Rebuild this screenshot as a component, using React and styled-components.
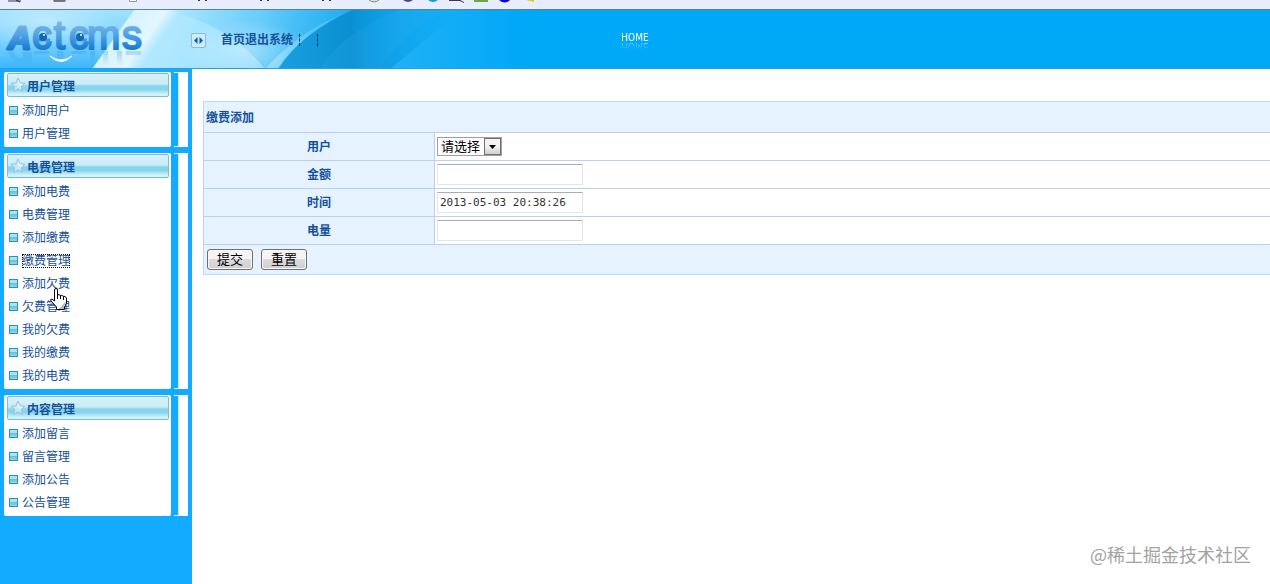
import React, { useState } from "react";
import styled, { createGlobalStyle } from "styled-components";

const GlobalStyle = createGlobalStyle`
  *, *::before {
    box-sizing: border-box;
  }
  body {
    margin: 0;
    background: #fff;
    color: #14509a;
    font-family: "Liberation Sans", "Noto Sans CJK SC", sans-serif;
    font-size: 12px;
    overflow: hidden;
  }
`;

const Page = styled.div`
  position: relative;
  display: flex;
  flex-direction: column;
  min-height: 100vh;
`;

const BrowserStrip = styled.div`
  height: 10px;
  background: linear-gradient(#eaecfd, #e4f0fb);
  border-bottom: 1px solid #5f7f9c;
  overflow: hidden;

  svg {
    display: block;
  }
`;

const Header = styled.header`
  position: relative;
  display: grid;
  grid-template-columns: 1fr auto 1fr;
  height: 59px;
  background: #00a8f8;
  border-bottom: 1px solid #2b9fda;
  overflow: hidden;
`;

const HeaderArt = styled.svg`
  position: absolute;
  top: 0;
  left: 0;
`;

const HeaderLeft = styled.div`
  position: relative;
  display: flex;
  align-items: center;
`;

const Toggle = styled.button`
  display: flex;
  align-items: center;
  justify-content: center;
  width: 15px;
  height: 15px;
  margin: 2px 0 0 41px;
  padding: 0;
  background: #c9edff;
  border: 1px solid #8fb8dc;
  border-radius: 2px;
`;

const TopNav = styled.nav`
  display: flex;
  margin-left: 15px;
  white-space: nowrap;
`;

const TopLink = styled.a`
  color: #14509a;
  font-size: 12px;
  font-weight: bold;
  line-height: 18px;
  text-decoration: none;
`;

const Divider = styled.span`
  height: 12px;
  margin: 3px 0 0 ${(props) => props.$gap}px;
  border-left: 1px dashed #0b2540;
`;

const Home = styled.a`
  align-self: center;
  color: #fff;
  font-family: "DejaVu Sans Condensed", "DejaVu Sans", sans-serif;
  font-size: 10px;
  line-height: 12px;
  padding-bottom: 4px;
  text-decoration: none;

  span {
    display: block;
    -webkit-box-reflect: below -4px linear-gradient(transparent 20%, rgba(255, 255, 255, 0.6));
  }
`;

const Body = styled.div`
  display: flex;
  flex: 1;
`;

const Sidebar = styled.aside`
  display: flex;
  flex-direction: column;
  flex: none;
  gap: 6px;
  width: 192px;
  padding: 3px 4px 0;
  background: #12abff;
`;

const PanelRow = styled.div`
  display: flex;
  justify-content: space-between;
`;

const Panel = styled.section`
  width: 167px;
  padding: 1px 2px 2px 3px;
  background: #fff;
  border-radius: 2px;
`;

const PanelEdge = styled.div`
  display: flex;
  width: 14px;
  padding: 1px 0;
  background: #fff;

  &::before {
    content: "";
    width: 5px;
    background: #12abff;
    border-right: 1px solid #bfe6ff;
  }
`;

const PanelTitle = styled.h2`
  display: flex;
  align-items: center;
  height: 24px;
  margin: 0 0 2px;
  padding: 3px 0 0 2px;
  border: 1px solid #74bfd8;
  border-radius: 2px;
  background: linear-gradient(#d6f1f8 0%, #caecf6 45%, #86d5ec 55%, #86d5ec 70%, #d3f2fa 92%);
  font-size: 12px;
  line-height: 18px;

  svg {
    margin: -4px 1px 0 0;
  }
`;

const Menu = styled.ul`
  margin: 0;
  padding: 0;
  list-style: none;
`;

const MenuItem = styled.li`
  display: flex;
  align-items: center;
  gap: 4px;
  height: 23px;
  padding-left: 2px;

  &::before {
    content: "";
    width: 9px;
    height: 9px;
    border: 1px solid #2596b8;
    background: linear-gradient(#a5e6f6 40%, #6cbfdc 50%, #8fd9ee);
  }
`;

const MenuLink = styled.a`
  color: #14509a;
  line-height: 14px;
  text-decoration: none;
  outline: ${(props) => (props.$focused ? "1px dotted #111" : "none")};
  outline-offset: -1px;
`;

const Main = styled.main`
  flex: 1;
  min-width: 0;
  padding: 32px 0 0 11px;
`;

const FormTable = styled.table`
  width: 100%;
  border-collapse: collapse;
  border: 1px solid #b5dcf6;
  border-right: none;
  table-layout: fixed;
`;

const TitleCell = styled.th`
  height: 31px;
  padding: 0 2px 2px;
  background: #e6f3ff;
  border-bottom: 1px solid #b9d0f0;
  text-align: left;
`;

const LabelCell = styled.th`
  width: 231px;
  height: 28px;
  padding: 0 0 2px;
  background: #e6f3ff;
  border: 1px solid #b9d0f0;
`;

const FieldCell = styled.td`
  padding: 0 2px;
  border-bottom: 1px solid #b9d0f0;
`;

const ButtonCell = styled.td`
  height: 30px;
  padding: 0 3px;
  background: #e6f3ff;
`;

const TextInput = styled.input`
  display: block;
  width: 146px;
  height: 21px;
  padding: 0 2px;
  background: #fff;
  border: 1px solid #dfe6ee;
  border-top-color: #abadb3;
  color: #333;
  font-family: "DejaVu Sans Mono", monospace;
  font-size: 11px;
`;

const SelectBox = styled.div`
  position: relative;
  width: 65px;
`;

const Select = styled.select`
  display: block;
  appearance: none;
  width: 100%;
  height: 19px;
  padding: 0 0 0 3px;
  background: #fff;
  border: 1px solid #a0a0a0;
  border-radius: 0;
  color: #000;
  font-family: "Liberation Sans", "Noto Sans CJK SC", sans-serif;
  font-size: 13px;
  line-height: 16px;
`;

const SelectArrow = styled.span`
  position: absolute;
  top: 1px;
  right: 1px;
  display: flex;
  align-items: center;
  justify-content: center;
  width: 17px;
  height: 17px;
  border: 1px solid #707070;
  background: linear-gradient(#f4f4f4 45%, #d0d0d0);
  pointer-events: none;
`;

const Buttons = styled.div`
  display: flex;
  gap: 8px;
`;

const Button = styled.button`
  width: 46px;
  height: 21px;
  padding: 0;
  border: 1px solid #707070;
  border-radius: 3px;
  background: linear-gradient(#f4f4f4 45%, #dcdcdc 50%, #cfcfcf);
  box-shadow: inset 0 0 0 1px #f8f8f8;
  color: #000;
  font-family: "Liberation Sans", "Noto Sans CJK SC", sans-serif;
  font-size: 13px;
  line-height: 18px;
`;

const Watermark = styled.div`
  position: absolute;
  right: 19px;
  bottom: 16px;
  color: #a2a2a2;
  font-family: "Noto Sans CJK SC", sans-serif;
  font-size: 18px;
  line-height: 27px;
`;

const Pointer = styled.svg`
  position: absolute;
  top: 288px;
  left: 50px;
  pointer-events: none;
`;

const Star = () => (
  <svg width="16" height="16" viewBox="0 0 16 16">
    <path
      d="M8 1l2 4.800 5 .4-3.800 3.300 1.200 5L8 11.800 3.600 14.500l1.200-5L1 6.200l5-.4z"
      fill="#c4ecf8"
      stroke="#9fbfe0"
      strokeLinejoin="round"
    />
    <path d="M8 3l1.400 3.500 3.600.4-2.800 2.300L8 6.500z" fill="#f2fcff" />
  </svg>
);

const StripIcons = () => (
  <svg width="560" height="9">
    <path d="M8 0h13v2H8z" fill="#8d929b" />
    <path d="M16 0l4 2" stroke="#222" />
    <path d="M53 0h13l-1 2H54z" fill="#777" />
    <path d="M129.500 0v1.500h7V0" fill="#fff" stroke="#899" />
    <path d="M199 0v1m7-1v1m55-1v1m7-1v1m55-1v1m7-1v1" stroke="#334" strokeWidth="2" />
    <path d="M369 0q5 4 10 0" fill="#ddd" stroke="#888" />
    <path d="M403 0h10q-5 4-10 0" fill="#4b4f78" />
    <path d="M428 0h10q-5 4-10 0" fill="#169be0" />
    <path d="M449 .5h12m-1 0l4 2" stroke="#40364a" />
    <path d="M474 0h14v2h-14z" fill="#6ea64e" />
    <path d="M499 0h11q-5 5-11 0" fill="#0808c8" />
    <path d="M526 0h8v2z" fill="#f0b91d" />
  </svg>
);

const Art = () => (
  <HeaderArt width="520" height="59" viewBox="0 0 520 59">
    <defs>
      <linearGradient id="sky">
        <stop offset="0" stopColor="#8bdcff" />
        <stop offset=".32" stopColor="#a8e6ff" />
        <stop offset=".5" stopColor="#8fdcfd" />
        <stop offset=".68" stopColor="#2ab4f5" />
        <stop offset="1" stopColor="#00a8f8" />
      </linearGradient>
      <linearGradient id="left" x1="0" y1="0" x2="0" y2="1">
        <stop offset="0" stopColor="#9fe2ff" />
        <stop offset=".5" stopColor="#82d4ff" />
        <stop offset="1" stopColor="#38b5fb" />
      </linearGradient>
      <linearGradient id="beam" gradientUnits="userSpaceOnUse" x1="113" y1="20" x2="200" y2="82">
        <stop offset="0" stopColor="#d8f4ff" stopOpacity=".9" />
        <stop offset=".3" stopColor="#eefaff" stopOpacity=".85" />
        <stop offset=".42" stopColor="#b8eaff" stopOpacity=".6" />
        <stop offset="1" stopColor="#b0e8ff" stopOpacity="0" />
      </linearGradient>
      <linearGradient id="top" x1="0" y1="0" x2="1" y2=".15">
        <stop offset="0" stopColor="#5cc6fa" stopOpacity="0" />
        <stop offset=".5" stopColor="#45bef8" stopOpacity=".5" />
        <stop offset="1" stopColor="#18a9ef" stopOpacity=".8" />
      </linearGradient>
      <linearGradient id="shade">
        <stop offset="0" stopColor="#19a0e0" />
        <stop offset=".4" stopColor="#0a90d2" />
        <stop offset="1" stopColor="#00a8f8" stopOpacity="0" />
      </linearGradient>
      <radialGradient id="glow">
        <stop offset="0" stopColor="#fff" stopOpacity=".75" />
        <stop offset="1" stopColor="#fff" stopOpacity="0" />
      </radialGradient>
    </defs>
    <path d="M0 0h520v59H0z" fill="url(#sky)" />
    <path d="M134 0h186v59H92z" fill="url(#beam)" />
    <path d="M165 0h190q-50 15-90 59Q230 15 165 0z" fill="url(#top)" />
    <path d="M0 0h134L92 59H0z" fill="url(#left)" />
    <ellipse cx="45" cy="12" rx="70" ry="24" fill="url(#glow)" opacity=".5" />
    <ellipse cx="245" cy="40" rx="65" ry="30" fill="url(#glow)" opacity=".5" />
    <path d="M352 0h110L390 59H278q22-35 74-59z" fill="url(#shade)" />
    <path d="M400 0q-55 20-80 59h60q25-40 70-59z" fill="#38b8f3" opacity=".15" />
  </HeaderArt>
);

const Logo = () => (
  <svg width="150" height="59" viewBox="0 0 150 59" fontFamily="Liberation Sans, sans-serif">
    <defs>
      <linearGradient id="ink" gradientUnits="userSpaceOnUse" x1="0" y1="12" x2="0" y2="41">
        <stop offset="0" stopColor="#7fb8e8" />
        <stop offset=".45" stopColor="#4fa2e4" />
        <stop offset="1" stopColor="#1276d0" />
      </linearGradient>
      <linearGradient id="fade" gradientUnits="userSpaceOnUse" x1="0" y1="41" x2="0" y2="26">
        <stop offset="0" stopColor="#2d8edb" stopOpacity=".3" />
        <stop offset="1" stopColor="#2d8edb" stopOpacity="0" />
      </linearGradient>
    </defs>
    <g fill="url(#fade)" transform="matrix(1 0 0 -1 0 82)">
      <path d="M8 40L23 16q7-6 9 2v22h-9v-6h-6l-4 6z" />
      <path d="M34 38h15v3H34zM57 30h6v11h-6zM71 38h15v3H71zM90 20h5v21h-5zM103 20h5v21h-5zM117 20h5v21h-5zM126 37h15v4h-15z" />
    </g>
    <g fill="url(#ink)" stroke="url(#ink)" strokeWidth="1">
      <text x="8" y="39" fontSize="32" fontWeight="bold" fontStyle="italic" strokeWidth="3" strokeLinejoin="round">
        A
      </text>
      <text x="32 54 69 87 122" y="39" fontSize="40" strokeWidth="2">
        ctcms
      </text>
    </g>
    <path d="M37 30h13M74 30h13" stroke="#3f98e0" strokeWidth="3" />
    <circle cx="43" cy="27" r="4" fill="#1765b5" />
    <circle cx="80" cy="27" r="4" fill="#1765b5" />
    <circle cx="44" cy="25" r="1" fill="#fff" />
    <circle cx="81" cy="25" r="1" fill="#fff" />
    <path d="M50 46q11 8 22 0q-11 11-22 0z" fill="#fff" stroke="#fff" />
  </svg>
);

const menus = [
  { title: "用户管理", items: ["添加用户", "用户管理"] },
  {
    title: "电费管理",
    items: [
      "添加电费",
      "电费管理",
      "添加缴费",
      "缴费管理",
      "添加欠费",
      "欠费管理",
      "我的欠费",
      "我的缴费",
      "我的电费",
    ],
  },
  { title: "内容管理", items: ["添加留言", "留言管理", "添加公告", "公告管理"] },
];

const App = () => {
  const [values, setValues] = useState({
    amount: "",
    time: "2013-05-03 20:38:26",
    power: "",
  });

  const handleChange = (e) => {
    setValues({ ...values, [e.target.name]: e.target.value });
  };

  const fields = [
    { name: "amount", label: "金额" },
    { name: "time", label: "时间" },
    { name: "power", label: "电量" },
  ];

  return (
    <Page>
      <GlobalStyle />
      <BrowserStrip>
        <StripIcons />
      </BrowserStrip>
      <Header>
        <Art />
        <HeaderLeft>
          <Logo />
          <Toggle type="button">
            <svg width="11" height="9" viewBox="0 0 11 9">
              <path d="M4.500 1v7L1 4.500zM6.500 1v7L10 4.500z" fill="#0c5aa6" />
            </svg>
          </Toggle>
          <TopNav>
            <TopLink href="#home">首页</TopLink>
            <TopLink href="#logout">退出系统</TopLink>
            <Divider $gap={6} />
            <Divider $gap={17} />
          </TopNav>
        </HeaderLeft>
        <Home href="#home">
          <span>HOME</span>
        </Home>
      </Header>
      <Body>
        <Sidebar>
          {menus.map((menu) => (
            <PanelRow key={menu.title}>
              <Panel>
                <PanelTitle>
                  <Star />
                  {menu.title}
                </PanelTitle>
                <Menu>
                  {menu.items.map((item) => (
                    <MenuItem key={item}>
                      <MenuLink href="#menu" $focused={item === "缴费管理"}>
                        {item}
                      </MenuLink>
                    </MenuItem>
                  ))}
                </Menu>
              </Panel>
              <PanelEdge />
            </PanelRow>
          ))}
        </Sidebar>
        <Main>
          <form onSubmit={(e) => e.preventDefault()}>
            <FormTable>
              <colgroup>
                <col width="231" />
                <col />
              </colgroup>
              <tbody>
                <tr>
                  <TitleCell colSpan="2">缴费添加</TitleCell>
                </tr>
                <tr>
                  <LabelCell>
                    <label htmlFor="user">用户</label>
                  </LabelCell>
                  <FieldCell>
                    <SelectBox>
                      <Select id="user">
                        <option>请选择</option>
                      </Select>
                      <SelectArrow>
                        <svg width="7" height="4" viewBox="0 0 7 4">
                          <path d="M0 0h7L3.500 4z" fill="#000" />
                        </svg>
                      </SelectArrow>
                    </SelectBox>
                  </FieldCell>
                </tr>
                {fields.map((field) => (
                  <tr key={field.name}>
                    <LabelCell>
                      <label htmlFor={field.name}>{field.label}</label>
                    </LabelCell>
                    <FieldCell>
                      <TextInput
                        id={field.name}
                        name={field.name}
                        value={values[field.name]}
                        onChange={handleChange}
                      />
                    </FieldCell>
                  </tr>
                ))}
                <tr>
                  <ButtonCell colSpan="2">
                    <Buttons>
                      <Button type="submit">提交</Button>
                      <Button type="reset">重置</Button>
                    </Buttons>
                  </ButtonCell>
                </tr>
              </tbody>
            </FormTable>
          </form>
        </Main>
      </Body>
      <Watermark>@稀土掘金技术社区</Watermark>
      {/* hand pointer over the menu */}
      <Pointer width="18" height="23" viewBox="0 0 18 23">
        <path
          d="M4.500 2q0-1.500 1.500-1.500T7.500 2v5q1.500-1 3 .5 1.500-.8 2.700.8 2.300-.5 3.300 1.700v5l-2 4v2.500H6.500V19L1 13q-1-2 1-2l2.500 2z"
          fill="#fff"
          stroke="#000"
        />
        <path d="M7.500 7v4m3-3.500V11m3-2.500V12" stroke="#000" fill="none" />
        <path d="M16 13l-2 6v2H9z" fill="#bbb" />
      </Pointer>
    </Page>
  );
};

export default App;
